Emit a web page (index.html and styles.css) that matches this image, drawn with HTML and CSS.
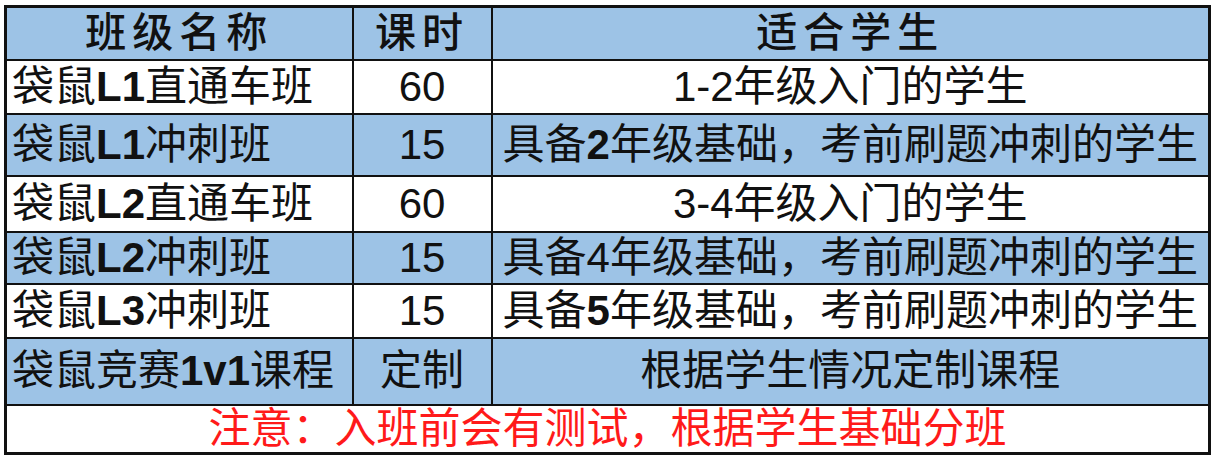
FILE: index.html
```html
<!DOCTYPE html>
<html lang="zh">
<head>
<meta charset="utf-8">
<link rel="stylesheet" href="styles.css">
</head>
<body>
<table class="course-table">
  <colgroup>
    <col class="c-name">
    <col class="c-hours">
    <col class="c-fit">
  </colgroup>
  <tr class="head r-head">
    <th>班级名称</th>
    <th>课时</th>
    <th>适合学生</th>
  </tr>
  <tr class="white r1">
    <td class="name">袋鼠<b>L1</b>直通车班</td>
    <td class="num">60</td>
    <td class="fit">1-2年级入门的学生</td>
  </tr>
  <tr class="blue r2">
    <td class="name">袋鼠<b>L1</b>冲刺班</td>
    <td class="num">15</td>
    <td class="fit">具备<b>2</b>年级基础，考前刷题冲刺的学生</td>
  </tr>
  <tr class="white r3">
    <td class="name">袋鼠<b>L2</b>直通车班</td>
    <td class="num">60</td>
    <td class="fit">3-4年级入门的学生</td>
  </tr>
  <tr class="blue r4">
    <td class="name">袋鼠<b>L2</b>冲刺班</td>
    <td class="num">15</td>
    <td class="fit">具备4年级基础，考前刷题冲刺的学生</td>
  </tr>
  <tr class="white r5">
    <td class="name">袋鼠<b>L3</b>冲刺班</td>
    <td class="num">15</td>
    <td class="fit">具备<b>5</b>年级基础，考前刷题冲刺的学生</td>
  </tr>
  <tr class="blue r6">
    <td class="name">袋鼠竞赛<b>1v1</b>课程</td>
    <td class="num">定制</td>
    <td class="fit">根据学生情况定制课程</td>
  </tr>
  <tr class="white r7">
    <td class="note" colspan="3">注意：入班前会有测试，根据学生基础分班</td>
  </tr>
</table>
</body>
</html>
```

FILE: styles.css
```css
html, body {
  margin: 0;
  padding: 0;
  background: #ffffff;
}

body {
  padding: 5px 0 0 4px;
  font-family: "Liberation Sans", "Noto Sans CJK SC", sans-serif;
}

.course-table {
  border-collapse: collapse;
  table-layout: fixed;
  width: 1204px;
  border: 3px solid #111111;
  font-size: 42px;
  color: #111111;
}

.c-name { width: 347px; }
.c-hours { width: 139px; }
.c-fit { width: 718px; }

.course-table th,
.course-table td {
  border: 2px solid #111111;
  padding: 0;
  vertical-align: middle;
  white-space: nowrap;
  overflow: hidden;
  line-height: 1;
}

.course-table b {
  font-weight: 700;
}

.head th {
  background: #9dc3e6;
  font-weight: 500;
  font-size: 41px;
  text-align: center;
  letter-spacing: 6px;
}

.blue td { background: #9dc3e6; }
.white td { background: #ffffff; }

.name {
  text-align: left;
  padding-left: 5px !important;
}

.num,
.fit {
  text-align: center;
}

.note {
  text-align: center;
  color: #ff1a1a;
}

.r-head { height: 53px; }
.r1 { height: 54px; }
.r2 { height: 62px; }
.r3 { height: 56px; }
.r4 { height: 52px; }
.r5 { height: 54px; }
.r6 { height: 67px; }
.r7 { height: 49px; }
```
